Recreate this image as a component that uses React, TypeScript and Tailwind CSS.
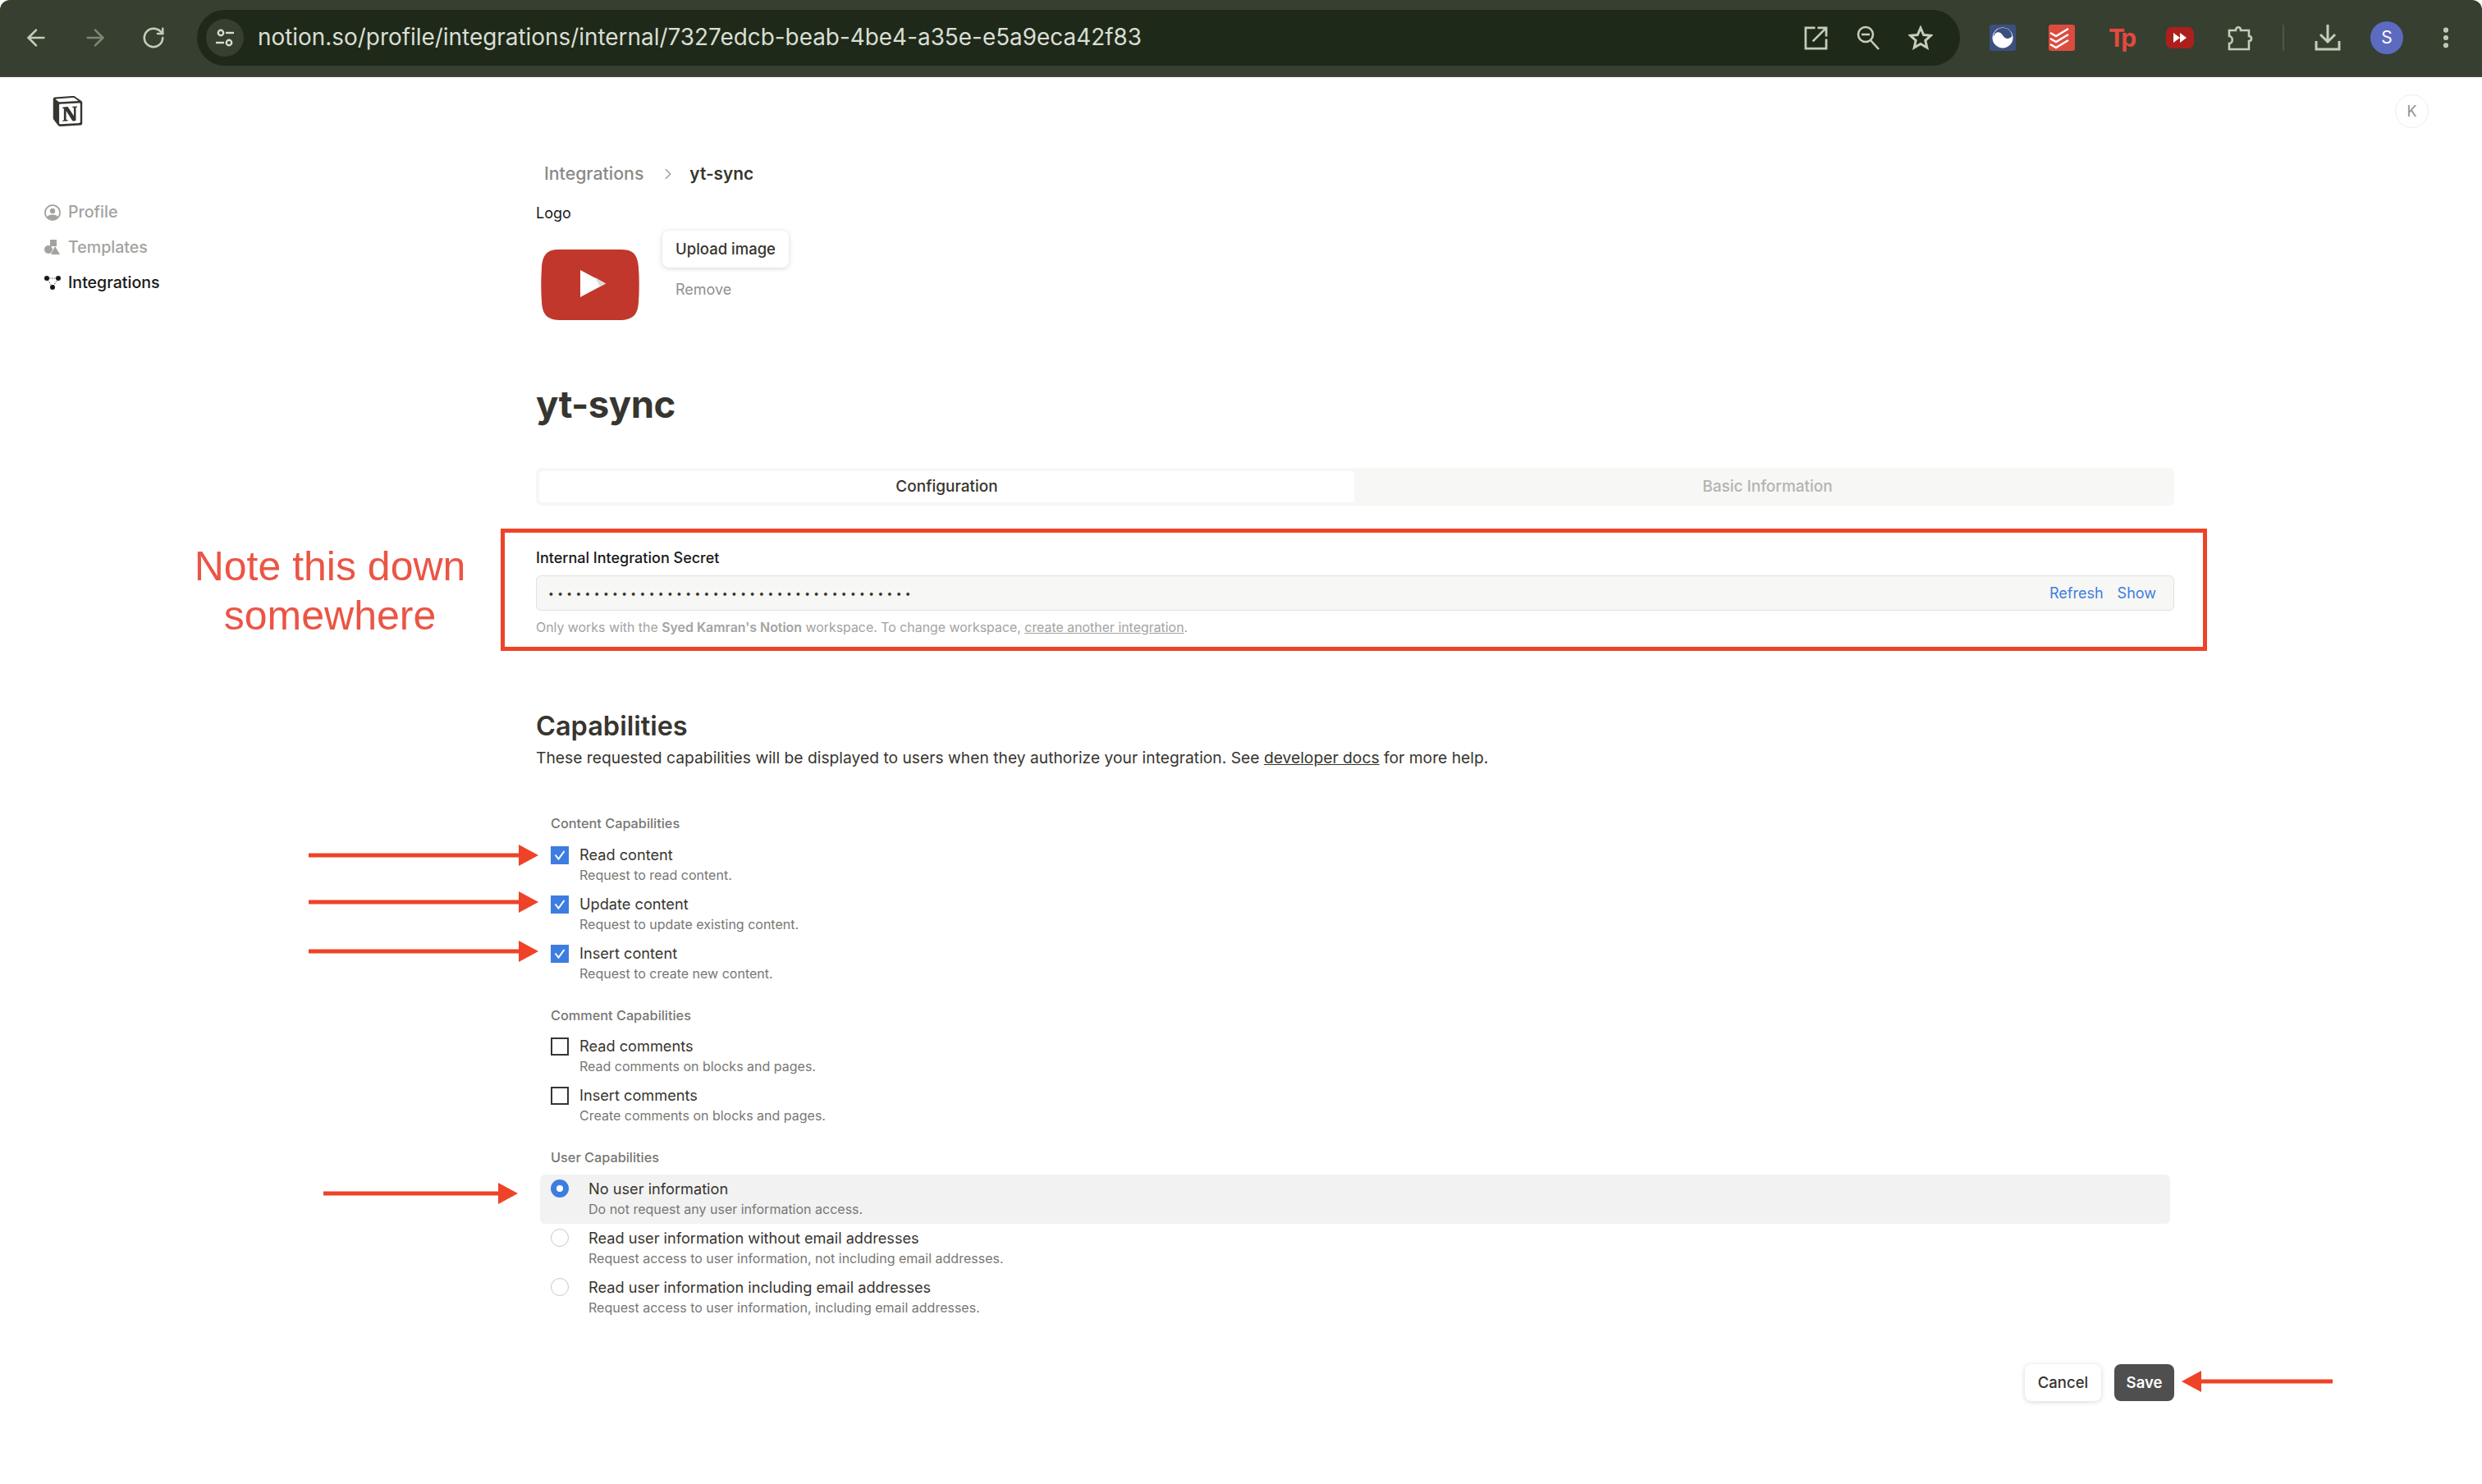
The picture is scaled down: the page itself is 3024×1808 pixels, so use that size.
import React from "react";
import { ArrowLeft, ArrowRight, RotateCw, MoreVertical, ChevronRight } from "lucide-react";
import { SiNotion } from "react-icons/si";

const contentCaps = [
  { label: "Read content", desc: "Request to read content.", checked: true },
  { label: "Update content", desc: "Request to update existing content.", checked: true },
  { label: "Insert content", desc: "Request to create new content.", checked: true },
];

const commentCaps = [
  { label: "Read comments", desc: "Read comments on blocks and pages.", checked: false },
  { label: "Insert comments", desc: "Create comments on blocks and pages.", checked: false },
];

const userCaps = [
  { label: "No user information", desc: "Do not request any user information access.", selected: true },
  { label: "Read user information without email addresses", desc: "Request access to user information, not including email addresses.", selected: false },
  { label: "Read user information including email addresses", desc: "Request access to user information, including email addresses.", selected: false },
];

function CheckItem({ label, desc, checked }: { label: string; desc: string; checked: boolean }) {
  return (
    <div className="flex h-[60px]">
      <div className="w-[35px] shrink-0 pt-[1px]">
        {checked ? (
          <div className="w-[22px] h-[22px] bg-[#3e7de0] flex items-center justify-center">
            <svg width="16" height="16" viewBox="0 0 16 16" fill="none" stroke="white" strokeWidth="2">
              <path d="M2.500 7.500 L6.500 12.500 L13.500 3" />
            </svg>
          </div>
        ) : (
          <div className="w-[22px] h-[22px] border-2 border-[#37352f]" />
        )}
      </div>
      <div className="-mt-[1px]">
        <div className="h-[24px] leading-[24px] text-[18.200px] text-[#37352f]">{label}</div>
        <div className="h-[24px] mt-[1px] leading-[24px] text-[16px] text-[#787774]">{desc}</div>
      </div>
    </div>
  );
}

function RadioItem({ label, desc, selected }: { label: string; desc: string; selected: boolean }) {
  return (
    <div className={`flex h-[60px] ml-[5px] mr-[5px] pl-[13px] pt-[6px] rounded-[6px] ${selected ? "bg-[#f2f2f2]" : ""}`}>
      <div className="w-[46px] shrink-0">
        {selected ? (
          <div className="w-[22px] h-[22px] rounded-full bg-[#3e7de0] flex items-center justify-center">
            <div className="w-[8px] h-[8px] rounded-full bg-white" />
          </div>
        ) : (
          <div className="w-[22px] h-[22px] rounded-full border border-[#c9c9c7] bg-white" />
        )}
      </div>
      <div className="-mt-[1px]">
        <div className="h-[24px] leading-[24px] text-[18.200px] text-[#37352f]">{label}</div>
        <div className="h-[24px] mt-[1px] leading-[24px] text-[16px] text-[#787774]">{desc}</div>
      </div>
    </div>
  );
}

function SideItem({ icon, label, active }: { icon: React.ReactNode; label: string; active?: boolean }) {
  return (
    <div className="flex items-center h-[43px]">
      <div className="w-[29px] shrink-0 flex items-center">{icon}</div>
      <span className={`text-[19.600px] font-medium ${active ? "text-[#191919]" : "text-[#a3a3a0]"}`}>{label}</span>
    </div>
  );
}

// red annotation arrow, sits over the page
function Arrow({ className, width, dir = "right" }: { className: string; width: number; dir?: "right" | "left" }) {
  return (
    <svg className={`absolute ${className}`} width={width} height="26" viewBox={`0 0 ${width} 26`} fill="#ee4328">
      {dir === "right" ? (
        <path d={`M0 10.500 H${width - 24} V0 L${width} 13 L${width - 24} 26 V15.500 H0 Z`} />
      ) : (
        <path d={`M${width} 10.500 H24 V0 L0 13 L24 26 V15.500 H${width} Z`} />
      )}
    </svg>
  );
}

function TopBar() {
  return (
    <div className="h-[94px] bg-[#363f30] rounded-t-[12px] flex items-center border-b-2 border-[#3f4839] text-[#c3cdba]">
      <div className="w-[240px] shrink-0 flex items-center pl-[28px] gap-[40px]">
        <ArrowLeft size={32} strokeWidth={2} />
        <ArrowRight size={32} strokeWidth={2} className="text-[#7b8673]" />
        <RotateCw size={30} strokeWidth={2} />
      </div>
      <div className="w-[2148px] h-[68px] rounded-full bg-[#1f2919] flex items-center pl-[11px]">
        <div className="w-[46px] h-[46px] rounded-full bg-[#363f30] flex items-center justify-center">
          <svg width="26" height="26" viewBox="0 0 26 26" fill="none" stroke="#d6dcd0" strokeWidth="2.400">
            <circle cx="8" cy="7" r="3.200" />
            <path d="M14 7 H24" />
            <circle cx="18" cy="19" r="3.200" />
            <path d="M2 19 H12" />
          </svg>
        </div>
        <span className="ml-[17px] text-[27.900px] text-[#d9ded4] whitespace-nowrap">
          notion.so/profile/integrations/internal/7327edcb-beab-4be4-a35e-e5a9eca42f83
        </span>
        <div className="ml-auto flex items-center gap-[35px] pr-[33px]">
          <svg width="29" height="29" viewBox="0 0 30 30" fill="none" stroke="currentColor" strokeWidth="2.800">
            <path d="M14 2 H2 V28 H28 V16" />
            <path d="M11 19 L27 3 M17 2 H28 V13" />
          </svg>
          <svg width="28" height="30" viewBox="0 0 28 30" fill="none" stroke="currentColor" strokeWidth="2.600">
            <circle cx="11" cy="11" r="9" />
            <path d="M6 11 H16 M17 18 L27 29" />
          </svg>
          <svg width="30" height="30" viewBox="0 0 30 30" fill="none" stroke="currentColor" strokeWidth="3">
            <path d="M15 3 L18.700 11.500 L27.500 12.300 L20.800 18.300 L22.800 27 L15 22.500 L7.200 27 L9.200 18.300 L2.500 12.300 L11.300 11.500 Z" />
          </svg>
        </div>
      </div>
      <div className="flex-1 flex items-center pl-[36px]">
        <svg width="32" height="32" viewBox="0 0 32 32">
          <rect width="32" height="32" rx="3" fill="#3c5080" />
          <circle cx="16" cy="16" r="12.500" fill="white" />
          <path d="M4.500 16 C7 7 13 8 16 13 C19 18 24 18 27.500 14 C26 6 21 4 16 4 C9 4 4.500 10 4.500 16 Z" fill="#3c5080" />
        </svg>
        <svg className="ml-[40px]" width="32" height="32" viewBox="0 0 32 32" fill="none">
          <rect width="32" height="32" rx="3" fill="#dc4c3e" />
          <path d="M2 10 L9 14 L24 5 M2 17 L9 21 L24 12 M2 24 L9 28 L24 19" stroke="white" strokeWidth="2.400" />
        </svg>
        <span className="ml-[41px] w-[32px] text-[30px] leading-none font-bold text-[#e5493f] tracking-[-3px]">Tp</span>
        <svg className="ml-[38px]" width="34" height="26" viewBox="0 0 34 26">
          <rect width="34" height="26" rx="7" fill="#ad1f1c" />
          <path d="M9 7 L17 13 L9 19 Z M17 7 L25 13 L17 19 Z" fill="white" />
        </svg>
        <svg className="ml-[40px]" width="32" height="32" viewBox="0 0 32 32" fill="none" stroke="currentColor" strokeWidth="2.600">
          <path d="M3 7 H11 C11 2 17 2 17 7 H27 V14 C31 14 31 20 27 20 V30 H3 V23 C8 23 8 14 3 14 Z" />
        </svg>
        <div className="ml-[36px] w-[2px] h-[32px] bg-[#4d5745]" />
        <svg className="ml-[37px]" width="32" height="32" viewBox="0 0 32 32" fill="none" stroke="currentColor" strokeWidth="3">
          <path d="M16 0 V21 M7 12 L16 21 L25 12" />
          <path d="M2 20 V30 H30 V20" />
        </svg>
        <div className="ml-[36px] w-[40px] h-[40px] rounded-full bg-[#5c6bc0] flex items-center justify-center text-white text-[21px]">S</div>
        <MoreVertical size={32} strokeWidth={2.600} className="ml-[36px]" />
      </div>
    </div>
  );
}

export default function App() {
  return (
    <div className="relative w-[3024px] h-[1808px] bg-white overflow-hidden" style={{ fontFamily: "Inter, 'Noto Sans', sans-serif" }}>
      <TopBar />

      <div className="flex">
        {/* Sidebar */}
        <aside className="w-[653px] shrink-0 pl-[54px]">
          <SiNotion size={37} className="text-[#37352f] ml-[10px] mt-[23px]" />
          <div className="mt-[83px]">
            <SideItem
              label="Profile"
              icon={
                <svg width="20" height="20" viewBox="0 0 20 20" fill="#a3a3a0">
                  <path fillRule="evenodd" d="M10 0a10 10 0 1 0 0 20a10 10 0 0 0 0-20zm0 2a8 8 0 0 1 6.300 12.900C15 13.300 12.700 12.500 10 12.500s-5 .8-6.300 2.400A8 8 0 0 1 10 2z" />
                  <circle cx="10" cy="8" r="3.200" />
                </svg>
              }
            />
            <SideItem
              label="Templates"
              icon={
                <svg width="19" height="19" viewBox="0 0 19 19" fill="#a3a3a0">
                  <rect x="7" y="0" width="8" height="8" />
                  <circle cx="5" cy="12" r="5" />
                  <path d="M13 8 L19 18 H8 Z" />
                </svg>
              }
            />
            <SideItem
              active
              label="Integrations"
              icon={
                <svg width="20" height="18" viewBox="0 0 20 18" fill="#191919">
                  <circle cx="3" cy="3" r="3" />
                  <circle cx="17" cy="3" r="3" />
                  <circle cx="10" cy="14" r="3" />
                  <path d="M3 3 H17 L10 14 Z" fill="none" stroke="#191919" strokeWidth="0.800" strokeDasharray="1.500 1.500" />
                </svg>
              }
            />
          </div>
        </aside>

        {/* Main column */}
        <main className="w-[1996px] shrink-0">
          <div className="mt-[103px] h-[30px] flex items-center pl-[10px] text-[21.300px] font-medium">
            <span className="text-[#8b8a87]">Integrations</span>
            <ChevronRight size={22} strokeWidth={1.500} className="ml-[19px] text-[#9b9a97]" />
            <span className="ml-[15px] text-[20.800px] text-[#37352f] font-semibold">yt-sync</span>
          </div>

          <div className="mt-[19px] h-[28px] leading-[28px] text-[18px] text-[#191919]">Logo</div>

          <div className="mt-[7px] flex">
            <svg className="ml-[6px] mt-[23px]" width="120" height="86" viewBox="0 0 120 86">
              <path d="M22 0 H98 C113 0 118 7 119 22 C120 36 120 50 119 64 C118 79 113 85 98 86 H22 C7 85 2 79 1 64 C0 50 0 36 1 22 C2 7 7 0 22 0 Z" fill="#c1372c" />
              <path d="M48 25 V58 L79 41.500 Z" fill="white" />
              <path d="M66 34 L79 41.500 L72 45 Z" fill="#dcdcdc" />
            </svg>
            <div className="ml-[28px]">
              <button className="w-[154px] h-[45px] rounded-[8px] bg-white shadow-[0_1px_6px_rgba(0,0,0,0.16)] text-[18.500px] font-medium text-[#37352f]">
                Upload image
              </button>
              <div className="mt-[13px] ml-[16px] h-[28px] leading-[28px] text-[18px] text-[#91918e]">Remove</div>
            </div>
          </div>

          <h1 className="mt-[73px] h-[60px] leading-[60px] text-[45.500px] font-bold text-[#37352f] tracking-[-0.5px]">yt-sync</h1>

          <div className="mt-[47px] h-[46px] rounded-[6px] bg-[#f7f7f5] p-[4px] flex items-stretch">
            <div className="w-[993px] rounded-[4px] bg-white flex items-center justify-center text-[19px] font-medium text-[#37352f]">Configuration</div>
            <div className="flex-1 pl-[12px] flex items-center justify-center text-[19px] font-medium text-[#b4b4b0]">Basic Information</div>
          </div>

          <div className="mt-[50px] h-[28px] leading-[28px] text-[18px] text-[#191919] font-medium">Internal Integration Secret</div>
          <div className="mt-[7px] h-[43px] rounded-[6px] border border-[#e1e1df] bg-[#f7f7f5] flex items-center pl-[14px] pr-[21px]">
            <span className="text-[12px] leading-none tracking-[4.400px] text-[#37352f]">{"•".repeat(40)}</span>
            <span className="ml-auto text-[18px] text-[#3e7de0]">Refresh</span>
            <span className="ml-[17px] text-[18px] text-[#3e7de0]">Show</span>
          </div>
          <p className="mt-[9px] h-[24px] leading-[24px] text-[15.900px] text-[#a3a3a0]">
            Only works with the <span className="font-semibold">Syed Kamran's Notion</span> workspace. To change workspace, <span className="underline">create another integration</span>.
          </p>

          <h2 className="mt-[88px] h-[40px] leading-[40px] text-[32.500px] font-semibold text-[#37352f]">Capabilities</h2>
          <p className="mt-[4px] h-[28px] leading-[28px] text-[19.250px] text-[#37352f]">
            These requested capabilities will be displayed to users when they authorize your integration. See <span className="underline">developer docs</span> for more help.
          </p>

          <div className="pl-[18px]">
            <div className="mt-[54px] h-[24px] leading-[24px] text-[16.300px] font-medium text-[#787774]">Content Capabilities</div>
            <div className="mt-[15px]">
              {contentCaps.map((c) => (
                <CheckItem key={c.label} {...c} />
              ))}
            </div>
            <div className="mt-[15px] h-[24px] leading-[24px] text-[16.300px] font-medium text-[#787774]">Comment Capabilities</div>
            <div className="mt-[14px]">
              {commentCaps.map((c) => (
                <CheckItem key={c.label} {...c} />
              ))}
            </div>
            <div className="mt-[15px] h-[24px] leading-[24px] text-[16.300px] font-medium text-[#787774]">User Capabilities</div>
          </div>
          <div className="mt-[9px]">
            {userCaps.map((c) => (
              <RadioItem key={c.label} {...c} />
            ))}
          </div>

          <div className="mt-[51px] flex justify-end">
            <button className="w-[93px] h-[45px] rounded-[8px] bg-white shadow-[0_1px_6px_rgba(0,0,0,0.16)] text-[18.500px] font-medium text-[#37352f]">Cancel</button>
            <button className="ml-[16px] w-[73px] h-[45px] rounded-[8px] bg-[#4f4f4f] text-[18.500px] font-semibold text-white">Save</button>
          </div>
        </main>

        <div className="flex-1 flex justify-end pr-[65px] pt-[21px] items-start">
          <div className="w-[41px] h-[41px] rounded-full border border-[#eeeeec] flex items-center justify-center text-[18px] text-[#91918e]">K</div>
        </div>
      </div>

      {/* Annotations drawn over the page */}
      <div className="absolute left-[202px] top-[660px] w-[400px] text-center text-[50px] leading-[60px] text-[#eb5545]" style={{ fontFamily: "'Liberation Sans', sans-serif" }}>
        Note this down
        <br />
        somewhere
      </div>
      <div className="absolute left-[610px] top-[644px] w-[2079px] h-[149px] border-[5px] border-[#ee4328]" />
      <Arrow className="left-[376px] top-[1029px]" width={280} />
      <Arrow className="left-[376px] top-[1086px]" width={280} />
      <Arrow className="left-[376px] top-[1146px]" width={280} />
      <Arrow className="left-[394px] top-[1441px]" width={237} />
      <Arrow className="left-[2658px] top-[1670px]" width={184} dir="left" />
    </div>
  );
}
